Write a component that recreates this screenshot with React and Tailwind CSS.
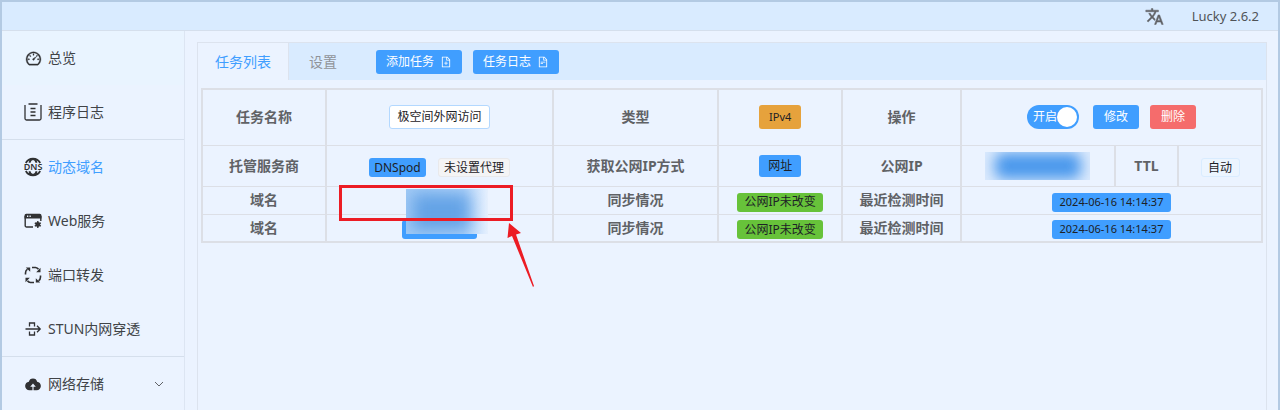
import { useState } from "react";
import { AiOutlineDashboard, AiOutlineFileAdd, AiOutlineFileText } from "react-icons/ai";

const TranslateIcon = () => (
  <svg viewBox="0 0 24 24" className="size-[19px]" fill="currentColor" stroke="currentColor" strokeWidth="0.6">
    <path d="M12.87 15.07l-2.54-2.51.03-.03A17.52 17.52 0 0 0 14.07 6H17V4h-7V2H8v2H1v1.99h11.17C11.5 7.92 10.44 9.75 9 11.35 8.07 10.32 7.3 9.19 6.69 8h-2c.73 1.63 1.73 3.17 2.98 4.56l-5.09 5.02L4 19l5-5 3.11 3.11.76-2.04zM18.5 10h-2L12 22h2l1.12-3h4.75L21 22h2l-4.5-12zm-2.62 7l1.62-4.33L19.12 17h-3.24z" />
  </svg>
);

const LogIcon = () => (
  <svg viewBox="0 0 18 18" className="size-[18px]" fill="none" stroke="currentColor" strokeWidth="1.3">
    <path d="M1 2v13.5A1.5 1.5 0 0 0 2.500 17h13a1.5 1.5 0 0 0 1.500-1.500V2M4.500 1h9M6.500 5.500h5M6.500 9h5M6.500 12.500h5" />
  </svg>
);

const DnsIcon = () => (
  <svg viewBox="0 0 18 18" className="size-[18px] overflow-visible" fill="none" stroke="currentColor" strokeWidth="1.8">
    <path d="M1.8 5a8.2 8.2 0 0 1 14.4 0M1.8 13a8.2 8.2 0 0 0 14.4 0M5.4 4.800c.8-2.400 2-3.800 3.600-3.800s2.800 1.400 3.600 3.800M5.400 13.200c.8 2.400 2 3.800 3.600 3.800s2.800-1.400 3.600-3.800" />
    <text x="9" y="12" textAnchor="middle" fontSize="9" fontWeight="600" fill="currentColor" stroke="none">DNS</text>
  </svg>
);

const WebIcon = () => (
  <svg viewBox="0 0 18 18" className="size-[18px]" fill="none" stroke="currentColor" strokeWidth="1.4">
    <path d="M9 15H2.500A1.300 1.300 0 0 1 1.200 13.700V4M16.800 4v5" />
    <path d="M.5 6.500V3.500A1.800 1.800 0 0 1 2.300 1.700h13.400a1.800 1.800 0 0 1 1.800 1.800v3z" fill="currentColor" stroke="none" />
    <path d="M3 4.200h1.300M5.500 4.200h1.300" stroke="#ebf3ff" />
    <circle cx="13.800" cy="12.500" r="2.400" fill="currentColor" stroke="none" />
    <path d="M13.800 9v7M10.800 10.800l6 3.400M16.800 10.800l-6 3.400" />
  </svg>
);

const ForwardIcon = () => (
  <svg viewBox="0 0 18 18" className="size-[18px]" fill="none" stroke="currentColor" strokeWidth="1.6">
    <path d="M1.500 8.500V7a4.500 4.500 0 0 1 2-3.800M8 1.500h3.500a4 4 0 0 1 3 1.800M16.500 9.500V11a4.500 4.500 0 0 1-2 3.800M10 16.500H6.500a4 4 0 0 1-3-1.800" />
    <path d="M1.800 1.500h4.400v4.300zM16.500 1.800v4.400h-4.300zM16.200 16.500h-4.400v-4.300zM1.500 16.200v-4.400h4.300z" fill="currentColor" stroke="none" />
  </svg>
);

const StunIcon = () => (
  <svg viewBox="0 0 18 18" className="size-[18px]" fill="none" stroke="currentColor" strokeWidth="1.3">
    <path d="M1.500 9h7M5.500 6.500V3h5v3.500M5.500 11.500V15h5v-3.500M8.500 9H16M13 5.800L16.200 9 13 12.200" />
  </svg>
);

const CloudIcon = () => (
  <svg viewBox="0 0 1024 1024" className="size-[18px]" fill="currentColor">
    <path d="M544 864V672h128L512 480 352 672h128v192H320v-1.600c-5.376.32-10.496 1.600-16 1.600A240 240 0 0 1 64 624c0-123.136 93.120-223.488 212.608-237.248A239.808 239.808 0 0 1 512 192a239.872 239.872 0 0 1 235.456 194.752c119.488 13.760 212.480 114.112 212.480 237.248a240 240 0 0 1-240 240c-5.376 0-10.560-1.280-16-1.600v1.600H544z" />
  </svg>
);

const groups = [
  [
    { label: "总览", icon: <AiOutlineDashboard className="size-[17px] stroke-[#303133] [stroke-width:20]" />, tint: true },
    { label: "程序日志", icon: <LogIcon /> },
  ],
  [
    { label: "动态域名", icon: <DnsIcon />, active: true },
    { label: "Web服务", icon: <WebIcon /> },
    { label: "端口转发", icon: <ForwardIcon /> },
    { label: "STUN内网穿透", icon: <StunIcon /> },
  ],
  [{ label: "网络存储", icon: <CloudIcon />, more: true }],
];

function Sidebar() {
  return (
    <nav className="w-[183px] shrink-0 border-r border-[#dce5f2]">
      {groups.map((items, i) => (
        <div key={i} className={i > 0 ? "border-t border-[#d5dfec]" : ""}>
          {items.map(item => (
            <a
              key={item.label}
              href="#"
              className={`flex h-[54px] items-center pl-[22px] pr-5 ${item.tint ? "bg-[#e9f4ff]" : ""}`}
            >
              <span className="flex w-[18px] justify-center text-[#303133]">{item.icon}</span>
              <span className={`ml-1.5 flex-1 ${item.active ? "text-[#409eff]" : "text-[#404347]"}`}>{item.label}</span>
              {item.more && (
                <svg viewBox="0 0 10 10" className="size-2.5" fill="none" stroke="#606266">
                  <path d="M1 3l4 4 4-4" />
                </svg>
              )}
            </a>
          ))}
        </div>
      ))}
    </nav>
  );
}

const Th = ({ children }) => (
  <th scope="row" className="border-x-2 border-y border-[#dcdfe6] p-0 text-center font-bold text-[#606266]">{children}</th>
);

const Td = ({ children, className = "", ...rest }) => (
  <td className={`border-x-2 border-y border-[#dcdfe6] p-0 ${className}`} {...rest}>
    <div className="flex items-center justify-center">{children}</div>
  </td>
);

const Tag = ({ children, className = "" }) => (
  <span className={`flex h-[19px] items-center justify-center rounded-[3px] text-xs text-[#1d2126] ${className}`}>{children}</span>
);

// red box and arrow pointing at the synced domains
function DomainMark() {
  return (
    <>
      <div className="absolute left-[79px] top-0.5 z-10 h-[45px] w-[82px] overflow-hidden bg-linear-to-r from-[#a3cbf6] via-[#b4d5fa] via-70% to-[#e6f0fe]">
        <div className="ml-1.5 mt-1 h-[38px] w-[58px] bg-[#64a3e6] blur-[8px]" />
      </div>
      <div className="absolute left-3 -top-0.5 z-20 h-9 w-[174px] border-[3px] border-[#ec1c24]" />
      <svg viewBox="0 0 30 68" className="absolute left-[180px] top-9 z-20 h-[68px] w-[30px]" fill="#ec1c24">
        <path d="M2 0l12 10-5 1.500L27 63l-1 1L5 13l-4.500 2z" />
      </svg>
    </>
  );
}

function TaskTable() {
  const [enabled, setEnabled] = useState(true);

  return (
    <table className="w-full table-fixed border-collapse border-2 border-[#dcdfe6]">
      <colgroup>
        <col className="w-[11.7%]" />
        <col className="w-[21.4%]" />
        <col className="w-[15.6%]" />
        <col className="w-[11.7%]" />
        <col className="w-[11.2%]" />
        <col className="w-[14.5%]" />
        <col className="w-[6%]" />
        <col className="w-[7.9%]" />
      </colgroup>
      <tbody>
        <tr className="h-14">
          <Th>任务名称</Th>
          <Td>
            <button className="h-6 w-[101px] rounded-[3px] border border-[#b3d8ff] bg-white text-xs text-[#1d2126]">极空间外网访问</button>
          </Td>
          <Th>类型</Th>
          <Td>
            <button className="h-6 w-[42px] rounded-[3px] bg-[#e6a23c] text-[11px] text-[#1d2126]">IPv4</button>
          </Td>
          <Th>操作</Th>
          <Td colSpan={3}>
            <button
              role="switch"
              aria-checked={enabled}
              onClick={() => setEnabled(!enabled)}
              className={`flex h-6 w-[52px] items-center justify-between rounded-full pl-1.5 pr-0.5 text-xs text-white ${enabled ? "bg-[#409eff]" : "flex-row-reverse bg-[#a8abb2]"}`}
            >
              <span>{enabled ? "开启" : "关闭"}</span>
              <span className="size-5 shrink-0 rounded-full bg-white" />
            </button>
            <button className="ml-3.5 h-6 w-[46px] rounded-[3px] bg-[#409eff] text-xs text-white">修改</button>
            <button className="ml-[11px] h-6 w-[46px] rounded-[3px] bg-[#f56c6c] text-xs text-white">删除</button>
          </Td>
        </tr>
        <tr className="h-[41px]">
          <Th>托管服务商</Th>
          <Td className="pt-1">
            <Tag className="w-[57px] bg-[#409eff]">DNSpod</Tag>
            <Tag className="ml-3 w-[72px] border border-[#e9e9eb] bg-[#f4f4f5]">未设置代理</Tag>
          </Td>
          <Th>获取公网IP方式</Th>
          <Td>
            <button className="h-[22px] w-[42px] rounded-[3px] bg-[#409eff] text-xs text-[#1d2126]">网址</button>
          </Td>
          <Th>公网IP</Th>
          <Td>
            <div className="flex h-7 w-[105px] items-center justify-center overflow-hidden bg-[#dbeafd]">
              <div className="h-[26px] w-[86px] rounded-lg bg-[#4a98ec] blur-[7px]" />
            </div>
          </Td>
          <Th>TTL</Th>
          <Td className="pt-1">
            <Tag className="w-[39px] border border-[#d9ecff] bg-[#ecf5ff]">自动</Tag>
          </Td>
        </tr>
        {[0, 1].map(i => (
          <tr key={i} className="h-7">
            <Th>域名</Th>
            <Td className="relative pt-1">
              <Tag className={i === 0 ? "w-[60px] bg-[#409eff]" : "w-[75px] bg-[#409eff]"} />
              {i === 0 && <DomainMark />}
            </Td>
            <Th>同步情况</Th>
            <Td className="pt-1">
              <Tag className="w-[86px] bg-[#67c23a]">公网IP未改变</Tag>
            </Td>
            <Th>最近检测时间</Th>
            <Td colSpan={3} className="pt-1">
              <Tag className="w-[119px] bg-[#409eff]"><span className="text-[11px]">2024-06-16 14:14:37</span></Tag>
            </Td>
          </tr>
        ))}
      </tbody>
    </table>
  );
}

export default function App() {
  return (
    <div className="flex h-screen flex-col overflow-hidden border-x-2 border-t-2 border-[#b3cae3] bg-[#ebf3ff] font-['Noto_Sans','Noto_Sans_CJK_SC',sans-serif] text-sm">
      <header className="flex h-[29px] shrink-0 items-center justify-end border-b border-[#d5dfec] bg-[#d9ebff] pr-[19px] text-[#505357]">
        <button aria-label="语言" className="mr-7 text-[#606266]">
          <TranslateIcon />
        </button>
        <span className="text-[13px]">Lucky 2.6.2</span>
      </header>
      <div className="flex min-h-0 flex-1">
        <Sidebar />
        <main className="ml-3 mr-[11px] mt-[11px] min-w-0 flex-1 border border-b-0 border-[#dce3ee]">
          <div className="flex h-[37px] items-center bg-[#d9ebff]">
            <button className="h-full w-[91px] border-r border-[#dce3ee] bg-[#ebf3ff] text-[#409eff]">任务列表</button>
            <button className="h-full w-[68px] text-[#909399]">设置</button>
            <button className="ml-[19px] flex h-6 w-[86px] items-center justify-center gap-1.5 rounded-[3px] bg-[#409eff] text-xs text-white">
              添加任务
              <AiOutlineFileAdd className="size-3" />
            </button>
            <button className="ml-[11px] flex h-6 w-[86px] items-center justify-center gap-1.5 rounded-[3px] bg-[#409eff] text-xs text-white">
              任务日志
              <AiOutlineFileText className="size-3" />
            </button>
          </div>
          <div className="px-[3px] pt-2">
            <TaskTable />
          </div>
        </main>
      </div>
    </div>
  );
}
